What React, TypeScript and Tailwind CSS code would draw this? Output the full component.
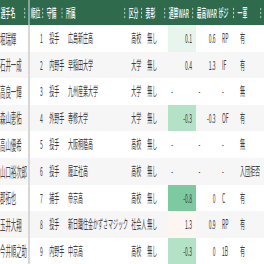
import React from "react";

type Row = {
  name: string;
  no: number;
  pos: string;
  school: string;
  cat: string;
  title: string;
  war: string;
  best: string;
  p: string;
  first: string;
  warBg: string;
};

const rows: Row[] = [
  { name: "堀瑞輝", no: 1, pos: "投手", school: "広島新庄高", cat: "高校", title: "無し", war: "0.1", best: "0.6", p: "RP", first: "有", warBg: "bg-[#e7f5ec]" },
  { name: "石井一成", no: 2, pos: "内野手", school: "早稲田大学", cat: "大学", title: "無し", war: "0.4", best: "1.3", p: "IF", first: "有", warBg: "" },
  { name: "高良一輝", no: 3, pos: "投手", school: "九州産業大学", cat: "大学", title: "無し", war: "-", best: "-", p: "-", first: "無", warBg: "" },
  { name: "森山恵佑", no: 4, pos: "外野手", school: "専修大学", cat: "大学", title: "無し", war: "-0.3", best: "-0.3", p: "OF", first: "有", warBg: "bg-[#b4e2c7]" },
  { name: "高山優希", no: 5, pos: "投手", school: "大阪桐蔭高", cat: "高校", title: "無し", war: "-", best: "-", p: "-", first: "無", warBg: "" },
  { name: "山口裕次郎", no: 6, pos: "投手", school: "履正社高", cat: "高校", title: "無し", war: "-", best: "-", p: "-", first: "入団拒否", warBg: "" },
  { name: "郡拓也", no: 7, pos: "捕手", school: "帝京高", cat: "高校", title: "無し", war: "-0.8", best: "0", p: "C", first: "有", warBg: "bg-[#7dc9a0]" },
  { name: "玉井大翔", no: 8, pos: "投手", school: "新日鐵住金かずさマジック", cat: "社会人", title: "無し", war: "1.3", best: "0.9", p: "RP", first: "有", warBg: "bg-[#fdf5f2]" },
  { name: "今井順之助", no: 9, pos: "内野手", school: "中京高", cat: "高校", title: "無し", war: "-0.3", best: "0", p: "1B", first: "有", warBg: "bg-[#b4e2c7]" },
];

const cols =
  "grid grid-cols-[70px_5px_40px_48px_157px_42px_58px_70px_55px_47px_68px]";

function Kebab() {
  return (
    <svg width="4" height="12" viewBox="0 0 4 12" className="shrink-0">
      <circle cx="2" cy="2" r="1.3" fill="#c9dbd0" />
      <circle cx="2" cy="6" r="1.3" fill="#c9dbd0" />
      <circle cx="2" cy="10" r="1.3" fill="#c9dbd0" />
    </svg>
  );
}

function H({ label }: { label: string }) {
  return (
    <div className="flex items-center justify-between gap-[4px] pl-[2px] pr-[6px] whitespace-nowrap">
      <span>{label}</span>
      <Kebab />
    </div>
  );
}

export default function App() {
  return (
    <div className="w-[264px] h-[264px] overflow-hidden bg-white">
      <div className="w-[660px] origin-top-left scale-x-40 font-['Noto_Sans_CJK_JP',sans-serif] text-[12.5px] leading-none text-[#3d3d3d]">
        <div className={`${cols} h-[25px] bg-[#2f6a4c] text-white text-[12px] font-medium`}>
          <H label="選手名" />
          <div className="bg-[#86a694]" />
          <H label="順位" />
          <H label="守備" />
          <H label="所属" />
          <H label="区分" />
          <H label="表彰" />
          <H label="通算WAR" />
          <H label="最高WAR" />
          <H label="ポジ" />
          <H label="一軍" />
        </div>
        {rows.map((r, i) => (
          <div
            key={r.no}
            className={`${cols} h-[26.6px] ${i % 2 === 1 ? "bg-[#f6f6f6]" : "bg-white"}`}
          >
            <div className="flex items-center whitespace-nowrap text-[#4a4a4a] text-[13.5px]">{r.name}</div>
            <div className="bg-[#d7d7d7]" />
            <div className="flex items-center justify-end pr-[8px]">{r.no}</div>
            <div className="flex items-center pl-[8px] whitespace-nowrap">{r.pos}</div>
            <div className="flex items-center pl-[7px] whitespace-nowrap">{r.school}</div>
            <div className="flex items-center pl-[8px] whitespace-nowrap">{r.cat}</div>
            <div className="flex items-center pl-[6px] whitespace-nowrap">{r.title}</div>
            <div className={`flex items-center pr-[10px] pl-[8px] ${r.war === "-" ? "justify-start" : "justify-end"} ${r.warBg}`}>{r.war}</div>
            <div className={`flex items-center pr-[6px] pl-[6px] ${r.best === "-" ? "justify-start" : "justify-end"}`}>{r.best}</div>
            <div className="flex items-center pl-[10px] whitespace-nowrap">{r.p}</div>
            <div className="flex items-center pl-[8px] whitespace-nowrap">{r.first}</div>
          </div>
        ))}
      </div>
    </div>
  );
}
